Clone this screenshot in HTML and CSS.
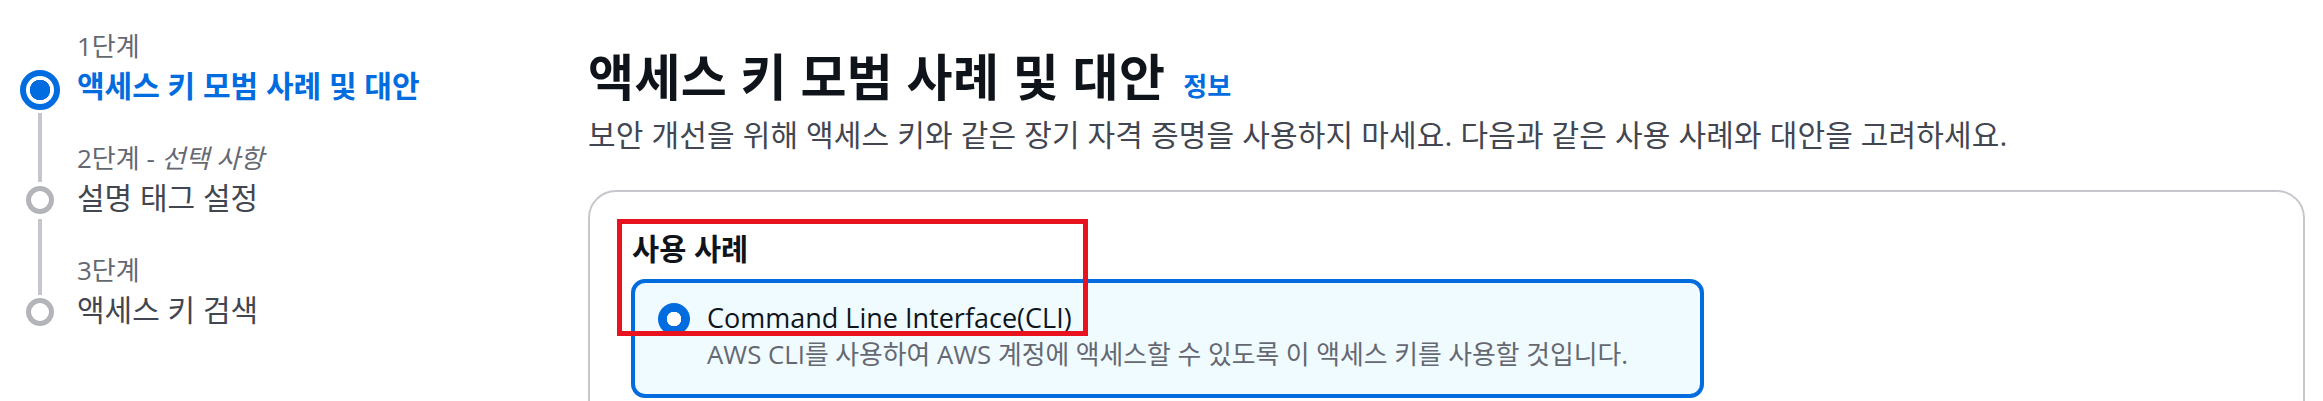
FILE: index.html
```html
<!DOCTYPE html>
<html>
<head>
  <link rel="stylesheet" href="styles.css">
</head>
<body>

<div class="layout">

  <nav class="wizard-nav">
    <ul class="steps">
      <li class="step step-active">
        <div class="step-label">1단계</div>
        <div class="step-row">
          <span class="marker"></span>
          <span class="step-title">액세스 키 모범 사례 및 대안</span>
        </div>
      </li>
      <li class="step">
        <div class="step-label">2단계 - <i>선택 사항</i></div>
        <div class="step-row">
          <span class="marker"></span>
          <span class="step-title">설명 태그 설정</span>
        </div>
      </li>
      <li class="step step-last">
        <div class="step-label">3단계</div>
        <div class="step-row">
          <span class="marker"></span>
          <span class="step-title">액세스 키 검색</span>
        </div>
      </li>
    </ul>
  </nav>

  <main class="content">
    <div class="page-header">
      <h1>액세스 키 모범 사례 및 대안</h1>
      <a class="info-link" href="#">정보</a>
    </div>
    <p class="description">보안 개선을 위해 액세스 키와 같은 장기 자격 증명을 사용하지 마세요. 다음과 같은 사용 사례와 대안을 고려하세요.</p>

    <div class="card">
      <div class="legend">사용 사례</div>

      <label class="tile tile-selected">
        <span class="radio"></span>
        <span class="tile-text">
          <span class="tile-title">Command Line Interface(CLI)</span>
          <span class="tile-desc">AWS CLI를 사용하여 AWS 계정에 액세스할 수 있도록 이 액세스 키를 사용할 것입니다.</span>
        </span>
      </label>

      <div class="highlight"></div>
    </div>
  </main>

</div>

</body>
</html>
```

FILE: styles.css
```css
html, body {
  margin: 0;
  height: 401px;
  overflow: hidden;
  background: #fff;
}

body {
  font-family: "Open Sans", "Noto Sans CJK KR", sans-serif;
  color: #0f141a;
}

.layout {
  display: flex;
}

/* wizard steps on the left */
.wizard-nav {
  flex: none;
  width: 588px;
  box-sizing: border-box;
  padding: 28px 0 0 20px;
}

.steps {
  list-style: none;
  margin: 0;
  padding: 0;
}

.step {
  position: relative;
  padding-left: 57px;
  height: 112px;
}

.step-label {
  font-size: 26px;
  line-height: 36px;
  color: #656871;
}

.step-label i {
  font-style: italic;
}

.step-row {
  position: relative;
  height: 44px;
}

.step-title {
  font-size: 30px;
  line-height: 44px;
  color: #424650;
}

.step-active .step-title {
  font-weight: 700;
  color: #006ce0;
}

.marker {
  position: absolute;
  left: -51px;
  top: 10px;
  width: 28px;
  height: 28px;
  box-sizing: border-box;
  border: 5px solid #b4b4bb;
  border-radius: 50%;
  background: #fff;
}

.step-active .marker {
  left: -57px;
  top: 6px;
  width: 40px;
  height: 40px;
  border: 6px solid #006ce0;
  background: radial-gradient(circle, #006ce0 0 10px, #fff 10.5px);
}

/* connector between markers */
.step::after {
  content: "";
  position: absolute;
  left: 18px;
  width: 4px;
  background: #c6c6cd;
  top: 85px;
  height: 69px;
}

.step + .step::after {
  top: 79px;
  height: 76px;
}

.step-last::after {
  display: none;
}

/* main content */
.content {
  flex: 1;
  padding: 0 18px 0 0;
}

.page-header {
  display: flex;
  align-items: baseline;
  gap: 18px;
  padding-top: 47px;
}

h1 {
  margin: 0;
  font-size: 50px;
  line-height: 60px;
  font-weight: 700;
  letter-spacing: 0.4px;
}

.info-link {
  font-size: 26px;
  font-weight: 700;
  color: #006ce0;
  text-decoration: none;
}

.description {
  margin: 8px 0 0;
  font-size: 30px;
  line-height: 40px;
  letter-spacing: 0.15px;
  color: #424650;
}

.card {
  position: relative;
  margin-top: 35px;
  height: 400px;
  border: 2px solid #c6c6cd;
  border-radius: 28px;
  padding: 39px 40px;
}

.legend {
  font-size: 29.5px;
  line-height: 36px;
  font-weight: 700;
  padding-left: 2px;
}

.tile {
  margin-top: 12px;
  margin-left: 1px;
  width: 1073px;
  box-sizing: border-box;
  display: flex;
  gap: 17px;
  padding: 15px 24px 24px 23px;
  border: 4px solid #006ce0;
  border-radius: 14px;
  background: #f0fbff;
}

.radio {
  flex: none;
  width: 32px;
  height: 32px;
  margin-top: 5px;
  border-radius: 50%;
  background: radial-gradient(circle, #fff 0 7px, #006ce0 7.5px);
}

.tile-text {
  display: flex;
  flex-direction: column;
}

.tile-title {
  font-size: 27px;
  line-height: 40px;
  color: #0f141a;
}

.tile-desc {
  font-size: 25.8px;
  line-height: 32px;
  color: #656871;
}

/* red annotation frame drawn over the card */
.highlight {
  position: absolute;
  left: 27px;
  top: 27px;
  width: 471px;
  height: 117px;
  box-sizing: border-box;
  border: 5px solid #e8131e;
}
```
